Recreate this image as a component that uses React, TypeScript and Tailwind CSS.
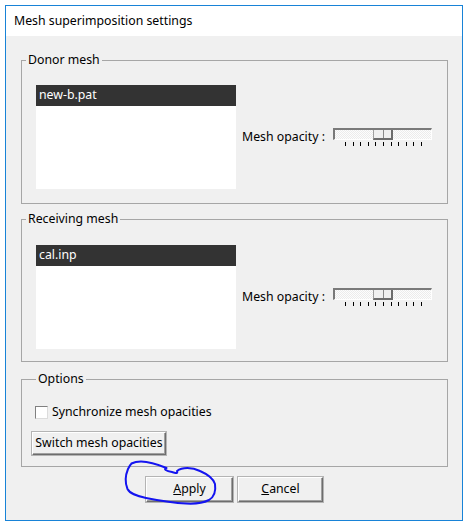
import type { ReactNode } from "react";

const font = { fontFamily: '"Noto Sans", "Liberation Sans", sans-serif' };

function Slider() {
  return (
    <div className="flex h-[18px] w-[99px] flex-col">
      <div className="relative h-[12px] w-[99px] border-t-2 border-l-2 border-r border-b border-t-[#7a7a7a] border-l-[#7a7a7a] border-r-white border-b-white bg-[repeating-conic-gradient(#ececec_0_25%,#fdfdfd_0_50%)] bg-[length:2px_2px]">
        <div className="absolute top-0 left-[38px] flex h-[10px] w-[20px] border-l border-r-2 border-b-2 border-l-[#a0a0a0] border-r-[#6d6d6d] border-b-[#6d6d6d] bg-[#f0f0f0]">
          <div className="h-full w-[9px]" />
          <div className="h-full w-px bg-[#8a8a8a]" />
        </div>
      </div>
      <div className="mt-[2px] ml-[12px] flex h-[4px] w-[77px] justify-between">
        {Array.from({ length: 11 }).map((_, i) => (
          <div key={i} className="h-full w-px bg-black" />
        ))}
      </div>
    </div>
  );
}

function Group({
  label,
  className,
  children,
}: {
  label: string;
  className: string;
  children: ReactNode;
}) {
  return (
    <fieldset className={`mx-[15px] w-[427px] border border-[#a6a6a6] ${className}`}>
      <legend className="ml-[4px] px-[2px] text-[12.3px] leading-[16px] text-black">
        {label}
      </legend>
      {children}
    </fieldset>
  );
}

function MeshRow({ item }: { item: string }) {
  return (
    <div className="flex items-center pl-[14px]">
      <div className="h-[104px] w-[200px] bg-white">
        <div className="flex h-[21px] items-center bg-[#333333] pl-[3px] text-[12.3px] text-white">
          {item}
        </div>
      </div>
      <div className="ml-[6px] w-[91px] text-[12.3px] text-black">Mesh opacity :</div>
      <Slider />
    </div>
  );
}

function WinButton({
  children,
  className,
}: {
  children: ReactNode;
  className: string;
}) {
  return (
    <button
      type="button"
      className={`flex items-center justify-center border border-t-white border-l-white border-r-[#6d6d6d] border-b-[#6d6d6d] bg-[#f0f0f0] text-[12.3px] text-black shadow-[inset_-1px_-1px_0_#a0a0a0,0_0_0_1px_#b4b4b4] ${className}`}
    >
      {children}
    </button>
  );
}

export default function App() {
  return (
    <div className="relative h-[528px] w-[464px] bg-white pt-[5px] pl-[5px]" style={font}>
      <div className="flex h-[516px] w-[458px] flex-col border border-[#1883d7]">
        <div className="flex h-[30px] items-center bg-white pl-[8px] text-[12.3px] text-black">
          Mesh superimposition settings
        </div>
        <div className="flex flex-1 flex-col bg-[#f0f0f0]">
          <Group label="Donor mesh" className="mt-[16px] pt-[17px] pb-[14px]">
            <MeshRow item="new-b.pat" />
          </Group>
          <Group label="Receiving mesh" className="mt-[7px] pt-[18px] pb-[12px]">
            <MeshRow item="cal.inp" />
          </Group>
          <Group label="Options" className="mt-[9px] pt-[15px] pb-[11px] pl-[10px]">
            <div className="flex h-[20px] items-center">
              <div className="ml-[3px] h-[13px] w-[13px] border border-t-[#808080] border-l-[#808080] border-r-[#dcdcdc] border-b-[#dcdcdc] bg-white" />
              <span className="ml-[4px] text-[12.3px] text-black">Synchronize mesh opacities</span>
            </div>
            <WinButton className="mt-[10px] h-[23px] w-[134px]">
              Switch mesh opacities
            </WinButton>
          </Group>
          <div className="mt-[10px] flex justify-center gap-[5px] pl-[1px]">
            <WinButton className="h-[25px] w-[87px]">
              <span>
                <span className="underline">A</span>pply
              </span>
            </WinButton>
            <WinButton className="h-[25px] w-[85px]">
              <span>
                <span className="underline">C</span>ancel
              </span>
            </WinButton>
          </div>
        </div>
      </div>
      <svg
        className="pointer-events-none absolute top-0 left-0"
        width="464"
        height="528"
        viewBox="0 0 464 528"
      >
        <path
          d="M131.5 463.5 C138 460 150 461 166.5 468 C163 469 166 471 172 472 C176 473 178 474 177 471 C182 467 192 467 200 471 C207 474 213 478 215 484 C216 491 214 497 209 500 C203 503 194 504 186 503.5 C172 503 156 500 146 498 C137 496 130 494 127.5 489 C125 483 125.5 475 128 469 C129.5 466 130.5 464.5 131.5 463.5"
          fill="none"
          stroke="#1414f0"
          strokeWidth="2"
          strokeLinecap="round"
          strokeLinejoin="round"
        />
      </svg>
    </div>
  );
}
